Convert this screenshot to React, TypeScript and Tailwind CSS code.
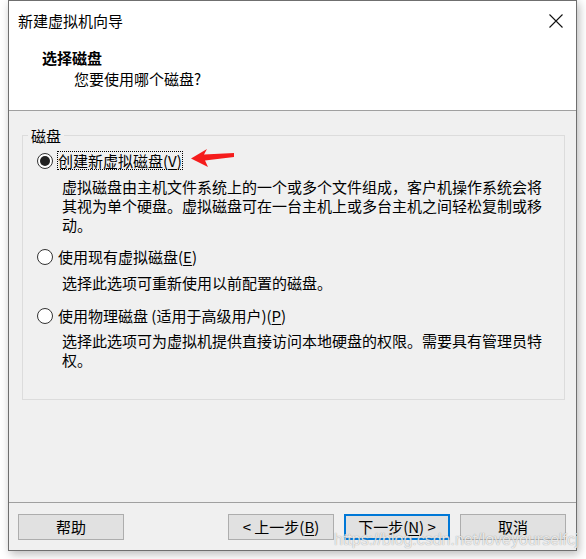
import React from 'react';

const font = "font-['Segoe_UI','Noto_Sans_CJK_SC',sans-serif]";

const Radio = ({ checked }: { checked?: boolean }) => (
  <span className="w-4 h-4 rounded-full border border-[#333333] bg-white flex items-center justify-center shrink-0">
    {checked && <span className="w-[10px] h-[10px] rounded-full bg-[#222222]" />}
  </span>
);

const Option = ({
  label,
  hotkey,
  checked,
  focused,
}: {
  label: string;
  hotkey: string;
  checked?: boolean;
  focused?: boolean;
}) => (
  <div className="flex items-center h-[19px]">
    <Radio checked={checked} />
    <span
      className={
        'ml-[4px] leading-[17px] border ' +
        (focused ? 'border-dotted border-black' : 'border-transparent')
      }
    >
      {label}(<span className="underline underline-offset-2">{hotkey}</span>)
    </span>
  </div>
);

const Button = ({ children, primary }: { children: React.ReactNode; primary?: boolean }) => (
  <button
    className={
      'w-[106px] h-[26px] bg-[#e1e1e1] text-black text-[15px] leading-[20px] flex items-center justify-center ' +
      (primary ? 'border-2 border-[#0078d7]' : 'border border-[#adadad]')
    }
  >
    {children}
  </button>
);

export default function App() {
  return (
    <div className={`w-[586px] h-[559px] bg-white relative overflow-hidden ${font} text-[15px] text-black`}>
      <div className="ml-[8px] w-[569px] h-[551px] border border-[#6f6f6f] bg-[#f0f0f0] flex flex-col shadow-[2px_3px_9px_rgba(0,0,0,0.28)]">
        {/* title + header */}
        <div className="h-[110px] bg-white border-b border-[#a0a0a0] shrink-0">
          <div className="h-[39px] flex items-center justify-between pl-[9px] pr-[13px]">
            <span className="leading-[19px]">新建虚拟机向导</span>
            <svg width="14" height="14" viewBox="0 0 14 14">
              <path d="M0.5 0.5 L13.5 13.5 M13.5 0.5 L0.5 13.5" stroke="#111" strokeWidth="1.1" />
            </svg>
          </div>
          <div className="pt-[8px] pl-[33px] leading-[19px] font-bold">选择磁盘</div>
          <div className="mt-[2px] pl-[65px] leading-[19px]">您要使用哪个磁盘?</div>
        </div>

        {/* body */}
        <div className="flex-1 pt-[15px] pl-[13px]">
          <fieldset className="w-[543px] h-[274px] border border-[#dcdcdc]">
            <legend className="ml-[5px] px-[3px] leading-[19px]">磁盘</legend>
            <div className="pt-[6px] pl-[14px] leading-[19px]">
              <Option label="创建新虚拟磁盘" hotkey="V" checked focused />
              <p className="mt-[7px] ml-[25px] w-[484px]">
                虚拟磁盘由主机文件系统上的一个或多个文件组成，客户机操作系统会将其视为单个硬盘。虚拟磁盘可在一台主机上或多台主机之间轻松复制或移动。
              </p>
              <div className="mt-[13px]">
                <Option label="使用现有虚拟磁盘" hotkey="E" />
              </div>
              <p className="mt-[7px] ml-[25px] w-[484px]">选择此选项可重新使用以前配置的磁盘。</p>
              <div className="mt-[14px]">
                <Option label="使用物理磁盘 (适用于高级用户)" hotkey="P" />
              </div>
              <p className="mt-[6px] ml-[25px] w-[484px]">
                选择此选项可为虚拟机提供直接访问本地硬盘的权限。需要具有管理员特权。
              </p>
            </div>
          </fieldset>
        </div>

        {/* footer */}
        <div className="h-[48px] border-t border-[#a0a0a0] pt-[11px] pl-[9px] pr-[10px] flex shrink-0">
          <Button>帮助</Button>
          <div className="ml-auto flex gap-[10px]">
            <Button>
              &lt; 上一步(<span className="underline underline-offset-2">B</span>)
            </Button>
            <Button primary>
              下一步(<span className="underline underline-offset-2">N</span>) &gt;
            </Button>
            <Button>取消</Button>
          </div>
        </div>
      </div>

      {/* red annotation arrow */}
      <svg className="absolute left-[191px] top-[148px]" width="45" height="20" viewBox="0 0 45 20">
        <polygon points="0,10.5 16,1 13,6.5 43,5 43,9 14,12.5 17,19" fill="#f51c1c" />
      </svg>

      {/* watermark */}
      <div className="absolute left-[334px] top-[530px] font-['Liberation_Sans',sans-serif] text-[16px] leading-[20px] text-white/80 [text-shadow:0_0_1px_rgba(0,0,0,0.45)]">
        https://blog.csdn.net/loveyourselfcj
      </div>
    </div>
  );
}
